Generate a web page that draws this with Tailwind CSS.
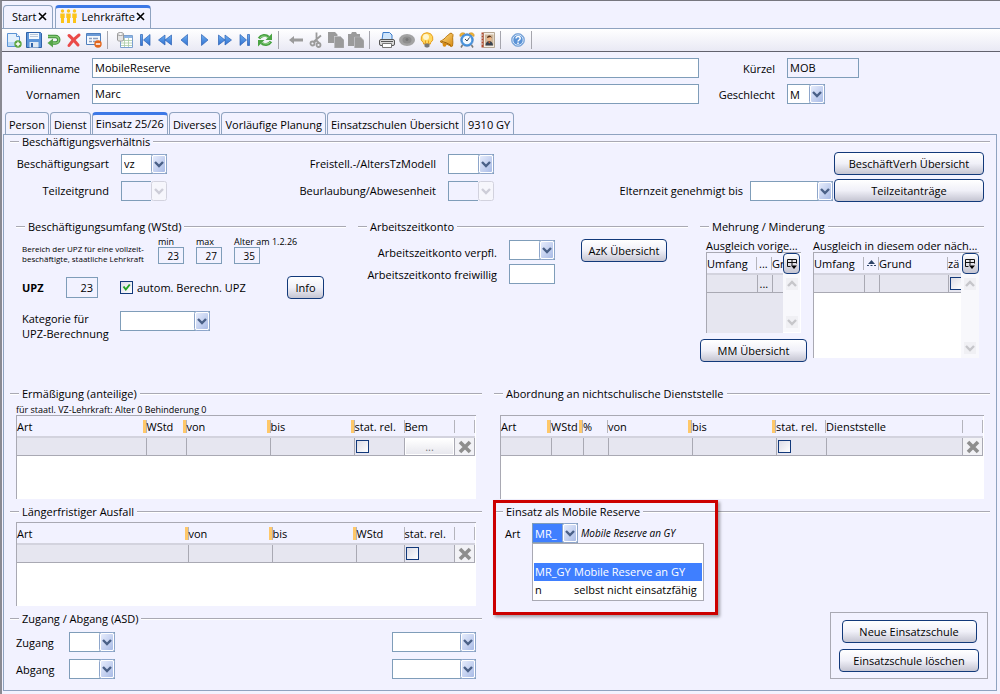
<!DOCTYPE html>
<html lang="de">
<head>
    <meta charset="UTF-8">
    <meta name="viewport" content="width=device-width, initial-scale=1.0">
    <title>Lehrkräfte - Einsatz 25/26</title>
    <script src="https://cdn.jsdelivr.net/npm/@tailwindcss/browser@4"></script>
</head>
<body class="flex min-h-screen flex-col border-t border-l-2 border-t-[#77777f] border-l-[#8a8a92] bg-[#f2f2ff] font-['Open_Sans','Noto_Sans',sans-serif] text-[11px] leading-[13px] text-black">

    <!-- Symbole -->
    <svg class="absolute size-0" aria-hidden="true">
        <defs>
            <linearGradient id="gArrow" x1="0" y1="0" x2="1" y2="1"><stop offset="0" stop-color="#e6ecfc"/><stop offset="1" stop-color="#a9bbe6"/></linearGradient>
            <linearGradient id="gBlue" x1="0" y1="0" x2="0" y2="1"><stop offset="0" stop-color="#6fb0f2"/><stop offset="1" stop-color="#2f6fd0"/></linearGradient>
            <linearGradient id="gGold" x1="0" y1="0" x2="1" y2="1"><stop offset="0" stop-color="#ffe08a"/><stop offset="1" stop-color="#d98a10"/></linearGradient>
        </defs>
        <symbol id="arrow" viewBox="0 0 16 20">
            <rect x=".5" y=".5" width="15" height="19" rx="2" fill="#fff" stroke="#8ea6cb"/>
            <rect x="2" y="2" width="12" height="16" rx="1" fill="url(#gArrow)"/>
            <path d="M4 8l4 4 4-4" fill="none" stroke="#4a6087" stroke-width="2.4"/>
        </symbol>
        <symbol id="arrowOff" viewBox="0 0 16 20">
            <rect x=".5" y=".5" width="15" height="19" rx="2" fill="#f6f6fc" stroke="#d2d2de"/>
            <path d="M4 8l4 4 4-4" fill="none" stroke="#cdcdd8" stroke-width="2.4"/>
        </symbol>
        <symbol id="close" viewBox="0 0 9 9"><path d="M1 1l7 7M8 1L1 8" stroke="#000" stroke-width="1.6"/></symbol>
        <symbol id="del" viewBox="0 0 14 14"><path d="M2 2l10 10M12 2L2 12" stroke="#8e8e8e" stroke-width="3.6"/></symbol>
        <symbol id="cols" viewBox="0 0 12 12">
            <path d="M1.5 8.500v-7h9v4M1.500 4.500h9M6 1.500v6M1.500 8.500h3" fill="none" stroke="#111"/>
            <path d="M5 7.500h6L8 11z"/>
        </symbol>
        <symbol id="up" viewBox="0 0 12 12"><path d="M2 8l4-4 4 4" fill="none" stroke="#c6c6ca" stroke-width="2.400"/></symbol>
        <symbol id="down" viewBox="0 0 12 12"><path d="M2 4l4 4 4-4" fill="none" stroke="#c6c6ca" stroke-width="2.400"/></symbol>
    </svg>

    <!-- Fensterreiter -->
    <nav class="flex h-[27px] items-end gap-[2px] pl-px">
        <div class="flex h-[23px] items-center gap-[2px] rounded-t-sm border border-b-0 border-[#8fa3c0] pr-[5px] pb-px pl-2">
            <span>Start</span>
            <button aria-label="Start schließen"><svg class="size-[9px]"><use href="#close"/></svg></button>
        </div>
        <div class="flex h-[23px] items-center gap-px rounded-t-sm border border-t-[3px] border-b-0 border-[#8fa3c0] border-t-[#3c78e6] pr-[5px] pb-1 pl-1">
            <svg class="mr-[3px] h-[14px] w-[17px]" viewBox="0 0 17 14" fill="#fcc419">
                <circle cx="2.500" cy="2" r="1.700"/><path d="M.3 4.500h4.400V9H4v5H1V9H.3z"/>
                <circle cx="8.500" cy="2" r="1.700"/><path d="M6.300 4.500h4.400V9H10v5H7V9h-.7z"/>
                <circle cx="14.500" cy="2" r="1.700"/><path d="M12.300 4.500h4.400V9H16v5h-3V9h-.7z"/>
            </svg>
            <span>Lehrkräfte</span>
            <button aria-label="Lehrkräfte schließen"><svg class="size-[9px]"><use href="#close"/></svg></button>
        </div>
    </nav>

    <!-- Werkzeugleiste -->
    <div role="toolbar" class="flex h-6 items-center gap-1 border-t border-b border-t-[#8fa3c0] border-b-[#62626e] bg-linear-to-b from-white to-[#e9e9f4] pl-1">
        <button aria-label="Neu"><svg class="size-4" viewBox="0 0 16 16"><path d="M1.500 1.500h9l3 3v10h-12z" fill="#e3f0fd" stroke="#5b93d4"/><path d="M2 10h11v4H2z" fill="#b9d8f6"/><path d="M10.500 1.500v3h3" fill="#fff" stroke="#5b93d4"/><circle cx="12" cy="12" r="3.700" fill="#5aa53c"/><path d="M12 9.800v4.400M9.800 12h4.400" stroke="#fff" stroke-width="1.400"/></svg></button>
        <button aria-label="Speichern"><svg class="size-4" viewBox="0 0 16 16"><path d="M.5.5h14l1 1v14H.5z" fill="#5d95d9" stroke="#2f62a8"/><path d="M3 1h10v6H3z" fill="#f4f8fd"/><path d="M4 2.500h8M4 4.500h8" stroke="#b7c6da"/><path d="M3.500 10h9v5.500h-9z" fill="#dfe8f3"/><path d="M5 11h2v4H5z" fill="#2f62a8"/></svg></button>
        <button aria-label="Rückgängig"><svg class="size-4" viewBox="0 0 16 16"><path d="M2 4.500h7.500a3.200 3.200 0 010 6.500H6" fill="none" stroke="#3f8f3a" stroke-width="3.400"/><path d="M2 4.500h7.500a3.200 3.200 0 010 6.500H6" fill="none" stroke="#86cb74" stroke-width="1.400"/><path d="M7 6.500v9L1.500 11z" fill="#55a548"/></svg></button>
        <button aria-label="Löschen"><svg class="size-4" viewBox="0 0 16 16"><path d="M3 3.500c3 2.500 6 6 9 9.500M13 3C9 6 6 9 3 13.500" fill="none" stroke="#ea4a48" stroke-width="3" stroke-linecap="round"/></svg></button>
        <button aria-label="Filter entfernen"><svg class="size-4" viewBox="0 0 16 16"><path d="M.5 1.500h14v11H.5z" fill="#f4f8fd" stroke="#4f7fbd"/><path d="M1 2h13v2H1z" fill="#6b9ad6"/><path d="M3 6.500h3M7 6.500h5M3 9.500h3M7 9.500h4" stroke="#8b9fc0" stroke-width="1.500"/><circle cx="12" cy="12" r="3.700" fill="#e2661c"/><path d="M9.800 12h4.400" stroke="#fff" stroke-width="1.500"/></svg></button>
        <span class="mr-[5px] ml-px h-[18px] w-px bg-[#a5a5ad]"></span>
        <button aria-label="Tabelle"><svg class="size-4" viewBox="0 0 16 16"><path d="M3.500 3.500h12v12h-12z" fill="#fff" stroke="#7ba0cf"/><path d="M4 4h11v2H4z" fill="#8cb4e4"/><path d="M4 8.500h11M4 11h11M4 13.500h11M7.500 6v9M11.500 6v9" stroke="#a9cba4" stroke-width=".8"/><path d="M.5 2v6c0 1.500 6 1.500 6 0V2z" fill="#e4e4e4" stroke="#999"/><ellipse cx="3.500" cy="2" rx="3" ry="1.500" fill="#f8f8f8" stroke="#999"/></svg></button>
        <button aria-label="Erster"><svg class="size-4" viewBox="0 0 16 16" fill="url(#gBlue)" stroke="#2c62b5" stroke-width=".7"><path d="M3.500 2.500h2v11h-2zM13 2.500v11L6.500 8z"/></svg></button>
        <button aria-label="Schnell zurück"><svg class="size-4" viewBox="0 0 16 16" fill="url(#gBlue)" stroke="#2c62b5" stroke-width=".7"><path d="M8 3v10L1.500 8zM14.500 3v10L8 8z"/></svg></button>
        <button aria-label="Zurück"><svg class="size-4" viewBox="0 0 16 16" fill="url(#gBlue)" stroke="#2c62b5" stroke-width=".7"><path d="M10.500 2.500v11L4 8z"/></svg></button>
        <button aria-label="Vor"><svg class="size-4" viewBox="0 0 16 16" fill="url(#gBlue)" stroke="#2c62b5" stroke-width=".7"><path d="M4.500 2.500v11L11 8z"/></svg></button>
        <button aria-label="Schnell vor"><svg class="size-4" viewBox="0 0 16 16" fill="url(#gBlue)" stroke="#2c62b5" stroke-width=".7"><path d="M1.500 3v10L8 8zM8 3v10l6.500-5z"/></svg></button>
        <button aria-label="Letzter"><svg class="size-4" viewBox="0 0 16 16" fill="url(#gBlue)" stroke="#2c62b5" stroke-width=".7"><path d="M3 2.500v11L9.500 8zM10.500 2.500h2v11h-2z"/></svg></button>
        <button aria-label="Aktualisieren"><svg class="size-4" viewBox="0 0 16 16"><path d="M2 6.500C4 3 9 2.500 11.500 5M14 9.500C12 13 7 13.500 4.500 11" fill="none" stroke="#4aa344" stroke-width="2.800"/><path d="M15 1.500V8H8.500zM1 14.500V8h6.500z" fill="#4aa344"/><path d="M3 6c2-2.500 6-2.500 8 0M13 10c-2 2.500-6 2.500-8 0" fill="none" stroke="#9ad78e"/></svg></button>
        <span class="mr-[5px] ml-px h-[18px] w-px bg-[#a5a5ad]"></span>
        <button aria-label="Navigieren"><svg class="size-4" viewBox="0 0 16 16" fill="#9b9b9b"><path d="M1 8l5-4v2.500h9v3H6V12z"/></svg></button>
        <button aria-label="Ausschneiden"><svg class="size-4" viewBox="0 0 16 16" fill="none" stroke="#9b9b9b" stroke-width="1.800"><path d="M8.500.5v7L6 11M13 3.500L6 9.500M8 8l3 3"/><circle cx="4.500" cy="11.500" r="2"/><circle cx="10.500" cy="13" r="2"/></svg></button>
        <button aria-label="Kopieren"><svg class="size-4" viewBox="0 0 16 16" fill="#9b9b9b"><path d="M0 0h7l2.500 2.500V4H6v7H0z"/><path d="M6.500 4.500h6L16 8v8H6.500z" stroke="#b8b8bc" stroke-width=".6"/></svg></button>
        <button aria-label="Einfügen"><svg class="size-4" viewBox="0 0 16 16" fill="#9b9b9b"><path d="M0 2h3l1-2h4l1 2h3v3H6v9H0z"/><path d="M6.500 5h6L16 8.500V16H6.500z" stroke="#b8b8bc" stroke-width=".6"/></svg></button>
        <span class="mr-[5px] ml-px h-[18px] w-px bg-[#a5a5ad]"></span>
        <button aria-label="Drucken"><svg class="size-4" viewBox="0 0 16 16"><path d="M4 .5h6.500L13 3v5H3z" fill="#cfe5fb" stroke="#3d7cc9"/><rect x=".5" y="7.500" width="15" height="6" rx="1.500" fill="#d9d9d9" stroke="#555"/><path d="M2 9.500h12" stroke="#555"/><path d="M3.500 11.500h9v4h-9z" fill="#fff" stroke="#777"/></svg></button>
        <button aria-label="Ansehen"><svg class="size-4" viewBox="0 0 16 16"><ellipse cx="8" cy="8" rx="8" ry="6" fill="#a3a3a3"/><ellipse cx="8" cy="8" rx="4.500" ry="3.500" fill="#8d8d8d"/><circle cx="8" cy="7.500" r="1.500" fill="#777"/></svg></button>
        <button aria-label="Tipp"><svg class="size-4" viewBox="0 0 16 16"><path d="M8 .7a6 5.600 0 00-3.500 10.100V12h7v-1.200A6 5.600 0 008 .7z" fill="#ffd75e" stroke="#e8a020"/><circle cx="7" cy="5" r="3" fill="#fff6cf"/><path d="M5.500 11.500h5v3l-1.500 1H7l-1.500-1z" fill="#777"/><path d="M6.500 8.500v3M9.500 8.500v3" stroke="#e8a020"/></svg></button>
        <button aria-label="Erinnerung"><svg class="size-4" viewBox="0 0 16 16"><path d="M11 1.500c1-1 3.500.5 3 2-1 3 .5 6-.5 10.500-1 1-2 .5-3-.5C7.500 11.500 3.500 12 1 9.500c2-1.500 3.500-1.500 5.500-4C8 3.500 9.500 3 11 1.500z" fill="url(#gGold)" stroke="#b9770e"/><circle cx="5.500" cy="12.800" r="1.900" fill="#d98a10"/><path d="M2.500 9.500c3 .5 6 1.500 9.500 4" fill="none" stroke="#9a5d08"/></svg></button>
        <button aria-label="Wecker"><svg class="size-4" viewBox="0 0 16 16"><path d="M1 4.500C0 1 4 0 6 1.500zM15 4.500C16 1 12 0 10 1.500z" fill="#f3b93b" stroke="#c98615" stroke-width=".6"/><path d="M3.500 13l-1.500 2.500M12.500 13l1.500 2.500" stroke="#777" stroke-width="1.500"/><circle cx="8" cy="8" r="6.300" fill="#4c97e0" stroke="#2f6fb5" stroke-width=".6"/><circle cx="8" cy="8" r="4.300" fill="#f5faff"/><path d="M6 7l2 2 2.500-3.500" fill="none" stroke="#345"/></svg></button>
        <button aria-label="Adressbuch"><svg class="ml-px size-4" viewBox="0 0 16 16"><path d="M3.500.5h11v15h-11z" fill="#f3eee6" stroke="#b5a692"/><path d="M1.500.500h2v15h-2z" fill="#b34a2c"/><path d="M0 3h3M0 6h3M0 9h3M0 12h3" stroke="#ddd"/><path d="M5 2.500h8.500v11H5z" fill="#cfb89c"/><circle cx="9.300" cy="6.500" r="2.200" fill="#f0b583"/><path d="M7 6c0-3.500 4.700-3.500 4.700 0L10.500 5z" fill="#5a3317"/><path d="M5.500 13.500c0-6 7.500-6 7.500 0z" fill="#38424f"/><path d="M8 9.500h2.500l-1.200 2z" fill="#de6b2c"/></svg></button>
        <span class="mr-[5px] h-[18px] w-px bg-[#a5a5ad]"></span>
        <button aria-label="Hilfe"><svg class="size-4" viewBox="0 0 16 16"><circle cx="8" cy="8" r="6.500" fill="#5b93d6" stroke="#8fb1dc"/><circle cx="8" cy="8" r="5.200" fill="none" stroke="#d6e6f8"/><path d="M6 6.500c0-2.700 4.200-2.500 4.200 0C10.200 8 8 8 8 9.600M8 10.600v1.500" fill="none" stroke="#fff" stroke-width="1.500"/></svg></button>
        <span class="ml-px h-[18px] w-px bg-[#a5a5ad]"></span>
    </div>

    <!-- Kopfdaten -->
    <form class="grid grid-cols-[78px_1fr_64px_72px] items-center gap-x-3 gap-y-[6px] pt-[6px] pr-[141px]">
        <label for="familienname" class="text-right">Familienname</label>
        <input id="familienname" value="MobileReserve" class="h-5 min-w-0 border border-[#7f9db9] bg-white px-[2px] pb-px">
        <label for="kuerzel" class="text-right">Kürzel</label>
        <input id="kuerzel" value="MOB" readonly class="h-5 min-w-0 border border-[#7f9db9] px-[2px] pb-px">
        <label for="vornamen" class="text-right">Vornamen</label>
        <input id="vornamen" value="Marc" class="h-5 min-w-0 border border-[#7f9db9] bg-white px-[2px] pb-px">
        <label for="geschlecht" class="text-right">Geschlecht</label>
        <div class="relative h-5 w-[38px]">
            <select id="geschlecht" class="h-5 w-full appearance-none border border-[#7f9db9] bg-white pl-[2px]"><option>M</option></select>
            <svg class="pointer-events-none absolute top-0 right-0 h-5 w-4"><use href="#arrow"/></svg>
        </div>
    </form>

    <!-- Karteireiter -->
    <nav class="mt-2 flex h-[22px] gap-px pl-[3px]">
        <button class="rounded-t-sm border border-b-0 border-[#8fa3c0] px-[3px] pt-[2px]">Person</button>
        <button class="rounded-t-sm border border-b-0 border-[#8fa3c0] px-[3px] pt-[2px]">Dienst</button>
        <button class="-mb-px rounded-t-sm border border-t-[3px] border-b-0 border-[#8fa3c0] border-t-[#3c78e6] bg-[#f2f2ff] px-[3px] pb-1">Einsatz 25/26</button>
        <button class="rounded-t-sm border border-b-0 border-[#8fa3c0] px-[3px] pt-[2px]">Diverses</button>
        <button class="rounded-t-sm border border-b-0 border-[#8fa3c0] px-[3px] pt-[2px]">Vorläufige Planung</button>
        <button class="rounded-t-sm border border-b-0 border-[#8fa3c0] px-[3px] pt-[2px]">Einsatzschulen Übersicht</button>
        <button class="rounded-t-sm border border-b-0 border-[#8fa3c0] px-[3px] pt-[2px]">9310 GY</button>
    </nav>

    <main class="mr-[3px] mb-[3px] ml-px flex-1 border border-[#8fa3c0] px-[6px] pb-[11px]">

        <!-- Beschäftigungsverhältnis -->
        <section>
            <h2 class="flex items-center gap-[3px] before:w-[9px] before:border-t before:border-b before:border-t-[#a9a9b3] before:border-b-white after:flex-1 after:border-t after:border-b after:border-t-[#a9a9b3] after:border-b-white">Beschäftigungsverhältnis</h2>
            <div class="mt-1 flex flex-col gap-1 pr-[6px]">
                <div class="flex h-[23px] items-center gap-3">
                    <label for="bart" class="w-[99px] text-right">Beschäftigungsart</label>
                    <div class="relative h-5 w-[46px]">
                        <select id="bart" class="h-5 w-full appearance-none border border-[#7f9db9] bg-white pl-[2px]"><option>vz</option></select>
                        <svg class="pointer-events-none absolute top-0 right-0 h-5 w-4"><use href="#arrow"/></svg>
                    </div>
                    <label for="freist" class="flex-[257] text-right">Freistell.-/AltersTzModell</label>
                    <div class="relative h-5 w-[46px]">
                        <select id="freist" class="h-5 w-full appearance-none border border-[#7f9db9] bg-white"></select>
                        <svg class="pointer-events-none absolute top-0 right-0 h-5 w-4"><use href="#arrow"/></svg>
                    </div>
                    <div class="flex flex-[478] justify-end">
                        <button class="h-[23px] w-[150px] rounded-sm border border-[#12397a] bg-linear-to-b from-white via-[#f0f0f8] to-[#c5c5d2]">BeschäftVerh Übersicht</button>
                    </div>
                </div>
                <div class="flex h-[23px] items-center gap-3">
                    <label for="tzgrund" class="w-[99px] text-right">Teilzeitgrund</label>
                    <div class="relative h-5 w-[46px]">
                        <select id="tzgrund" disabled class="h-5 w-full appearance-none border border-[#7f9db9]"></select>
                        <svg class="pointer-events-none absolute top-0 right-0 h-5 w-4 bg-[#f2f2ff]"><use href="#arrowOff"/></svg>
                    </div>
                    <label for="beurl" class="flex-[257] text-right">Beurlaubung/Abwesenheit</label>
                    <div class="relative h-5 w-[46px]">
                        <select id="beurl" disabled class="h-5 w-full appearance-none border border-[#7f9db9]"></select>
                        <svg class="pointer-events-none absolute top-0 right-0 h-5 w-4 bg-[#f2f2ff]"><use href="#arrowOff"/></svg>
                    </div>
                    <div class="flex flex-[478] items-center justify-end">
                        <label for="eltern" class="mr-[7px]">Elternzeit genehmigt bis</label>
                        <div class="relative mr-px h-5 w-[83px]">
                            <select id="eltern" class="h-5 w-full appearance-none border border-[#7f9db9] bg-white"></select>
                            <svg class="pointer-events-none absolute top-0 right-0 h-5 w-4"><use href="#arrow"/></svg>
                        </div>
                        <button class="h-[23px] w-[150px] rounded-sm border border-[#12397a] bg-linear-to-b from-white via-[#f0f0f8] to-[#c5c5d2]">Teilzeitanträge</button>
                    </div>
                </div>
            </div>
        </section>

        <div class="mt-[18px] grid grid-cols-[330fr_330fr_284fr] gap-3 px-[6px]">
            <!-- Beschäftigungsumfang -->
            <section class="min-w-0">
                <h2 class="flex items-center gap-[3px] before:w-[9px] before:border-t before:border-b before:border-t-[#a9a9b3] before:border-b-white after:flex-1 after:border-t after:border-b after:border-t-[#a9a9b3] after:border-b-white">Beschäftigungsumfang (WStd)</h2>
                <div class="mt-1 flex items-end gap-3 pl-[6px] text-[9px] leading-[10px]">
                    <p class="w-[124px] text-[8px] whitespace-nowrap">Bereich der UPZ für eine vollzeit-<br>beschäftigte, staatliche Lehrkraft</p>
                    <div class="flex w-[26px] flex-col whitespace-nowrap">
                        <label for="umin">min</label>
                        <input id="umin" value="23" class="h-[17px] w-[26px] border border-[#7f9db9] pr-1 text-right text-[10px]">
                    </div>
                    <div class="flex w-[26px] flex-col whitespace-nowrap">
                        <label for="umax">max</label>
                        <input id="umax" value="27" class="h-[17px] w-[26px] border border-[#7f9db9] pr-1 text-right text-[10px]">
                    </div>
                    <div class="flex w-[26px] flex-col whitespace-nowrap">
                        <label for="alter">Alter am 1.2.26</label>
                        <input id="alter" value="35" class="h-[17px] w-[26px] border border-[#7f9db9] pr-1 text-right text-[10px]">
                    </div>
                </div>
                <div class="mt-3 flex h-[23px] items-center pr-[22px] pl-[6px]">
                    <label for="upz" class="w-11 font-bold">UPZ</label>
                    <input id="upz" value="23" class="h-[21px] w-8 border border-[#7f9db9] pr-1 text-right">
                    <span class="relative ml-[22px] flex">
                        <input id="auto" type="checkbox" checked class="peer size-[13px] appearance-none border border-[#12397a] bg-linear-to-br from-[#dcdce6] to-white">
                        <svg class="pointer-events-none absolute inset-0 hidden size-[13px] peer-checked:block" viewBox="0 0 13 13"><path d="M3.500 5.500l2.300 3 4-5" fill="none" stroke="#21a121" stroke-width="2"/></svg>
                    </span>
                    <label for="auto" class="ml-1">autom. Berechn. UPZ</label>
                    <button class="ml-auto h-[23px] w-[37px] rounded-sm border border-[#12397a] bg-linear-to-b from-white via-[#f0f0f8] to-[#c5c5d2]">Info</button>
                </div>
                <div class="mt-3 flex pl-[6px]">
                    <label for="kat" class="w-[98px] leading-[15px] whitespace-nowrap">Kategorie für<br>UPZ-Berechnung</label>
                    <div class="relative h-5 w-[90px]">
                        <select id="kat" class="h-5 w-full appearance-none border border-[#7f9db9] bg-white"></select>
                        <svg class="pointer-events-none absolute top-0 right-0 h-5 w-4"><use href="#arrow"/></svg>
                    </div>
                </div>
            </section>

            <!-- Arbeitszeitkonto -->
            <section class="min-w-0">
                <h2 class="flex items-center gap-[3px] before:w-[9px] before:border-t before:border-b before:border-t-[#a9a9b3] before:border-b-white after:flex-1 after:border-t after:border-b after:border-t-[#a9a9b3] after:border-b-white">Arbeitszeitkonto</h2>
                <div class="mt-[6px] flex gap-[26px]">
                    <div class="grid grid-cols-[139px_46px] items-center gap-x-3 gap-y-1 pt-px whitespace-nowrap">
                        <label for="azkv" class="pt-1 text-right">Arbeitszeitkonto verpfl.</label>
                        <div class="relative h-5">
                            <select id="azkv" class="h-5 w-full appearance-none border border-[#7f9db9] bg-white"></select>
                            <svg class="pointer-events-none absolute top-0 right-0 h-5 w-4"><use href="#arrow"/></svg>
                        </div>
                        <label for="azkf" class="text-right">Arbeitszeitkonto freiwillig</label>
                        <input id="azkf" class="h-5 min-w-0 border border-[#7f9db9] bg-white px-1">
                    </div>
                    <button class="h-[23px] w-[86px] rounded-sm border border-[#12397a] bg-linear-to-b from-white via-[#f0f0f8] to-[#c5c5d2] whitespace-nowrap">AzK Übersicht</button>
                </div>
            </section>

            <!-- Mehrung / Minderung -->
            <section class="min-w-0">
                <h2 class="flex items-center gap-[3px] before:w-[9px] before:border-t before:border-b before:border-t-[#a9a9b3] before:border-b-white after:flex-1 after:border-t after:border-b after:border-t-[#a9a9b3] after:border-b-white">Mehrung / Minderung</h2>
                <div class="mt-[6px] flex gap-[6px] pr-[5px]">
                    <div class="w-[107px]">
                        <div class="pr-[6px] pl-[6px]">
                            <h3 class="whitespace-nowrap">Ausgleich vorige...</h3>
                            <div class="flex h-[81px] border-t border-l border-[#a9a9b3] bg-[#e6e6f0]">
                                <div class="min-w-0 flex-1">
                                    <table class="w-full table-fixed border-collapse text-left">
                                        <colgroup><col class="w-[50px]"><col class="w-[15px]"><col></colgroup>
                                        <thead class="bg-[#f2f2ff]">
                                            <tr class="h-[21px] border-b-2 border-[#d3d3de]">
                                                <th class="p-0 font-normal"><div class="border-r border-[#b4b4bc]">Umfang</div></th>
                                                <th class="p-0 font-normal"><div class="border-r border-[#b4b4bc] pl-[2px]">...</div></th>
                                                <th class="p-0 font-normal">Gr</th>
                                            </tr>
                                        </thead>
                                        <tbody>
                                            <tr class="h-[18px] border-b border-[#a9a9b3]">
                                                <td class="border-r border-[#a9a9b3] p-0"></td>
                                                <td class="border-r border-[#a9a9b3] p-0 pl-[2px]">...</td>
                                                <td class="p-0"></td>
                                            </tr>
                                        </tbody>
                                    </table>
                                </div>
                                <div class="flex w-[18px] flex-col items-center border-r border-b border-white bg-[#f8f8fc]">
                                    <button aria-label="Spalten" class="flex h-[21px] w-[17px] items-center justify-center rounded-sm border border-[#12397a] bg-linear-to-b from-white to-[#c5c5d2]"><svg class="size-3"><use href="#cols"/></svg></button>
                                    <button aria-label="Nach oben" class="mt-1 bg-[#f0f0f4]"><svg class="size-3"><use href="#up"/></svg></button>
                                    <button aria-label="Nach unten" class="mt-auto mb-1 bg-[#f0f0f4]"><svg class="size-3"><use href="#down"/></svg></button>
                                </div>
                            </div>
                        </div>
                        <button class="mt-[6px] h-[23px] w-full rounded-sm border border-[#12397a] bg-linear-to-b from-white via-[#f0f0f8] to-[#c5c5d2]">MM Übersicht</button>
                    </div>
                    <div class="min-w-0 flex-1">
                        <h3 class="whitespace-nowrap">Ausgleich in diesem oder näch...</h3>
                        <div class="flex h-[106px] border-t border-l border-[#a9a9b3] bg-white">
                            <div class="min-w-0 flex-1">
                                <table class="w-full table-fixed border-collapse text-left">
                                    <colgroup><col class="w-[50px]"><col class="w-[15px]"><col><col class="w-[13px]"></colgroup>
                                    <thead class="bg-[#f2f2ff]">
                                        <tr class="h-[21px] border-b-2 border-[#d3d3de]">
                                            <th class="p-0 font-normal"><div class="border-r border-[#b4b4bc]">Umfang</div></th>
                                            <th class="p-0 font-normal"><div class="flex h-[13px] items-center justify-center border-r border-[#b4b4bc]"><svg class="h-2 w-[9px]" viewBox="0 0 9 8" fill="#2d4467"><path d="M4.500 1L8 5H1z"/><path d="M0 6h2v1H0zM3.500 6h2v1h-2zM7 6h2v1H7z"/></svg></div></th>
                                            <th class="p-0 font-normal"><div class="border-r border-[#b4b4bc]">Grund</div></th>
                                            <th class="p-0 font-normal">zä</th>
                                        </tr>
                                    </thead>
                                    <tbody class="bg-[#e6e6f0]">
                                        <tr class="h-[18px] border-b border-[#a9a9b3]">
                                            <td class="border-r border-[#a9a9b3] p-0"></td>
                                            <td class="border-r border-[#a9a9b3] p-0"></td>
                                            <td class="border-r border-[#a9a9b3] p-0"></td>
                                            <td class="overflow-hidden p-0 pl-px"><input type="checkbox" aria-label="zählt" class="block size-[13px] appearance-none border border-[#12397a] bg-linear-to-br from-[#dcdce6] to-white"></td>
                                        </tr>
                                    </tbody>
                                </table>
                            </div>
                            <div class="flex w-[18px] flex-col items-center bg-[#f8f8fc]">
                                <button aria-label="Spalten" class="flex h-[21px] w-[17px] items-center justify-center rounded-sm border border-[#12397a] bg-linear-to-b from-white to-[#c5c5d2]"><svg class="size-3"><use href="#cols"/></svg></button>
                                <button aria-label="Nach oben" class="mt-1 bg-[#f0f0f4]"><svg class="size-3"><use href="#up"/></svg></button>
                                <button aria-label="Nach unten" class="mt-auto mb-1 bg-[#f0f0f4]"><svg class="size-3"><use href="#down"/></svg></button>
                            </div>
                        </div>
                    </div>
                </div>
            </section>
        </div>

        <div class="mt-[25px] grid grid-cols-[472fr_496fr] gap-3">
            <div class="min-w-0">
                <!-- Ermäßigung -->
                <section>
                    <h2 class="flex items-center gap-[3px] before:w-[9px] before:border-t before:border-b before:border-t-[#a9a9b3] before:border-b-white after:flex-1 after:border-t after:border-b after:border-t-[#a9a9b3] after:border-b-white">Ermäßigung (anteilige)</h2>
                    <p class="mt-1 pl-[6px] text-[9px] leading-[11px]">für staatl. VZ-Lehrkraft: Alter 0 Behinderung 0</p>
                    <div class="mx-[6px] h-[84px] border-t border-l border-[#a9a9b3] bg-white pr-px">
                        <table class="w-full table-fixed border-collapse text-left">
                            <colgroup><col><col class="w-10"><col class="w-[84px]"><col class="w-[84px]"><col class="w-[50px]"><col class="w-[50px]"><col class="w-5"></colgroup>
                            <thead class="bg-[#f2f2ff]">
                                <tr class="h-[21px] border-b-2 border-[#d3d3de]">
                                    <th class="p-0 font-normal"><div class="border-r border-[#b4b4bc] shadow-[inset_-3px_0_#ffc869]">Art</div></th>
                                    <th class="p-0 font-normal"><div class="border-r border-[#b4b4bc] shadow-[inset_-3px_0_#ffc869]">WStd</div></th>
                                    <th class="p-0 font-normal"><div class="border-r border-[#b4b4bc] shadow-[inset_-3px_0_#ffc869]">von</div></th>
                                    <th class="p-0 font-normal"><div class="border-r border-[#b4b4bc] shadow-[inset_-3px_0_#ffc869]">bis</div></th>
                                    <th class="p-0 font-normal whitespace-nowrap"><div class="border-r border-[#b4b4bc]">stat. rel.</div></th>
                                    <th class="p-0 font-normal"><div class="border-r border-[#b4b4bc]">Bem</div></th>
                                    <th class="p-0 font-normal"><div class="h-[13px] border-r border-[#b4b4bc]"></div></th>
                                </tr>
                            </thead>
                            <tbody class="bg-[#e6e6f0]">
                                <tr class="h-[18px] border-b border-[#a9a9b3]">
                                    <td class="border-r border-[#a9a9b3] p-0"></td>
                                    <td class="border-r border-[#a9a9b3] p-0"></td>
                                    <td class="border-r border-[#a9a9b3] p-0"></td>
                                    <td class="border-r border-[#a9a9b3] p-0"></td>
                                    <td class="border-r border-[#a9a9b3] p-0 pl-px"><input type="checkbox" aria-label="stat. rel." class="block size-[13px] appearance-none border border-[#12397a] bg-linear-to-br from-[#dcdce6] to-white"></td>
                                    <td class="border-r border-[#a9a9b3] p-0"><button class="block h-[17px] w-full border border-white bg-linear-to-b from-white to-[#e8e8ee] text-[#777]">...</button></td>
                                    <td class="border-r border-[#a9a9b3] p-0"><button aria-label="Zeile löschen" class="flex h-[17px] w-full items-center justify-center bg-[#f2f2f6]"><svg class="size-[14px]"><use href="#del"/></svg></button></td>
                                </tr>
                            </tbody>
                        </table>
                    </div>
                </section>

                <!-- Längerfristiger Ausfall -->
                <section class="mt-[6px]">
                    <h2 class="flex items-center gap-[3px] before:w-[9px] before:border-t before:border-b before:border-t-[#a9a9b3] before:border-b-white after:flex-1 after:border-t after:border-b after:border-t-[#a9a9b3] after:border-b-white">Längerfristiger Ausfall</h2>
                    <div class="mx-[6px] mt-1 h-[84px] border-t border-l border-[#a9a9b3] bg-white pr-px">
                        <table class="w-full table-fixed border-collapse text-left">
                            <colgroup><col><col class="w-[84px]"><col class="w-[84px]"><col class="w-12"><col class="w-[50px]"><col class="w-5"></colgroup>
                            <thead class="bg-[#f2f2ff]">
                                <tr class="h-[21px] border-b-2 border-[#d3d3de]">
                                    <th class="p-0 font-normal"><div class="border-r border-[#b4b4bc] shadow-[inset_-3px_0_#ffc869]">Art</div></th>
                                    <th class="p-0 font-normal"><div class="border-r border-[#b4b4bc] shadow-[inset_-3px_0_#ffc869]">von</div></th>
                                    <th class="p-0 font-normal"><div class="border-r border-[#b4b4bc] shadow-[inset_-3px_0_#ffc869]">bis</div></th>
                                    <th class="p-0 font-normal"><div class="border-r border-[#b4b4bc]">WStd</div></th>
                                    <th class="p-0 font-normal whitespace-nowrap"><div class="border-r border-[#b4b4bc]">stat. rel.</div></th>
                                    <th class="p-0 font-normal"><div class="h-[13px] border-r border-[#b4b4bc]"></div></th>
                                </tr>
                            </thead>
                            <tbody class="bg-[#e6e6f0]">
                                <tr class="h-[18px] border-b border-[#a9a9b3]">
                                    <td class="border-r border-[#a9a9b3] p-0"></td>
                                    <td class="border-r border-[#a9a9b3] p-0"></td>
                                    <td class="border-r border-[#a9a9b3] p-0"></td>
                                    <td class="border-r border-[#a9a9b3] p-0"></td>
                                    <td class="border-r border-[#a9a9b3] p-0 pl-px"><input type="checkbox" aria-label="stat. rel." class="block size-[13px] appearance-none border border-[#12397a] bg-linear-to-br from-[#dcdce6] to-white"></td>
                                    <td class="border-r border-[#a9a9b3] p-0"><button aria-label="Zeile löschen" class="flex h-[17px] w-full items-center justify-center bg-[#f2f2f6]"><svg class="size-[14px]"><use href="#del"/></svg></button></td>
                                </tr>
                            </tbody>
                        </table>
                    </div>
                </section>

                <!-- Zugang / Abgang -->
                <section class="mt-[6px]">
                    <h2 class="flex items-center gap-[3px] before:w-[9px] before:border-t before:border-b before:border-t-[#a9a9b3] before:border-b-white after:flex-1 after:border-t after:border-b after:border-t-[#a9a9b3] after:border-b-white">Zugang / Abgang (ASD)</h2>
                    <div class="mt-[7px] flex flex-col gap-[7px] px-[6px]">
                        <div class="flex items-center">
                            <label for="zugang" class="w-[53px]">Zugang</label>
                            <div class="relative h-5 w-[46px]">
                                <select id="zugang" class="h-5 w-full appearance-none border border-[#7f9db9] bg-white"></select>
                                <svg class="pointer-events-none absolute top-0 right-0 h-5 w-4"><use href="#arrow"/></svg>
                            </div>
                            <div class="relative ml-auto h-5 w-[84px]">
                                <select aria-label="Zugang Datum" class="h-5 w-full appearance-none border border-[#7f9db9] bg-white"></select>
                                <svg class="pointer-events-none absolute top-0 right-0 h-5 w-4"><use href="#arrow"/></svg>
                            </div>
                        </div>
                        <div class="flex items-center">
                            <label for="abgang" class="w-[53px]">Abgang</label>
                            <div class="relative h-5 w-[46px]">
                                <select id="abgang" class="h-5 w-full appearance-none border border-[#7f9db9] bg-white"></select>
                                <svg class="pointer-events-none absolute top-0 right-0 h-5 w-4"><use href="#arrow"/></svg>
                            </div>
                            <div class="relative ml-auto h-5 w-[84px]">
                                <select aria-label="Abgang Datum" class="h-5 w-full appearance-none border border-[#7f9db9] bg-white"></select>
                                <svg class="pointer-events-none absolute top-0 right-0 h-5 w-4"><use href="#arrow"/></svg>
                            </div>
                        </div>
                    </div>
                </section>
            </div>

            <div class="flex min-w-0 flex-col">
                <!-- Abordnung -->
                <section>
                    <h2 class="flex items-center gap-[3px] before:w-[9px] before:border-t before:border-b before:border-t-[#a9a9b3] before:border-b-white after:flex-1 after:border-t after:border-b after:border-t-[#a9a9b3] after:border-b-white">Abordnung an nichtschulische Dienststelle</h2>
                    <div class="mx-[6px] mt-[15px] h-[84px] border-t border-l border-[#a9a9b3] bg-white pr-px">
                        <table class="w-full table-fixed border-collapse text-left">
                            <colgroup><col class="w-[50px]"><col class="w-8"><col class="w-[25px]"><col class="w-[84px]"><col class="w-[84px]"><col class="w-[50px]"><col><col class="w-5"></colgroup>
                            <thead class="bg-[#f2f2ff]">
                                <tr class="h-[21px] border-b-2 border-[#d3d3de]">
                                    <th class="p-0 font-normal"><div class="border-r border-[#b4b4bc] shadow-[inset_-3px_0_#ffc869]">Art</div></th>
                                    <th class="p-0 font-normal"><div class="border-r border-[#b4b4bc] shadow-[inset_-3px_0_#ffc869]">WStd</div></th>
                                    <th class="p-0 font-normal"><div class="border-r border-[#b4b4bc]">%</div></th>
                                    <th class="p-0 font-normal"><div class="border-r border-[#b4b4bc] shadow-[inset_-3px_0_#ffc869]">von</div></th>
                                    <th class="p-0 font-normal"><div class="border-r border-[#b4b4bc] shadow-[inset_-3px_0_#ffc869]">bis</div></th>
                                    <th class="p-0 font-normal whitespace-nowrap"><div class="border-r border-[#b4b4bc]">stat. rel.</div></th>
                                    <th class="p-0 font-normal"><div class="border-r border-[#b4b4bc]">Dienststelle</div></th>
                                    <th class="p-0 font-normal"><div class="h-[13px] border-r border-[#b4b4bc]"></div></th>
                                </tr>
                            </thead>
                            <tbody class="bg-[#e6e6f0]">
                                <tr class="h-[18px] border-b border-[#a9a9b3]">
                                    <td class="border-r border-[#a9a9b3] p-0"></td>
                                    <td class="border-r border-[#a9a9b3] p-0"></td>
                                    <td class="border-r border-[#a9a9b3] p-0"></td>
                                    <td class="border-r border-[#a9a9b3] p-0"></td>
                                    <td class="border-r border-[#a9a9b3] p-0"></td>
                                    <td class="border-r border-[#a9a9b3] p-0 pl-px"><input type="checkbox" aria-label="stat. rel." class="block size-[13px] appearance-none border border-[#12397a] bg-linear-to-br from-[#dcdce6] to-white"></td>
                                    <td class="border-r border-[#a9a9b3] p-0"></td>
                                    <td class="border-r border-[#a9a9b3] p-0"><button aria-label="Zeile löschen" class="flex h-[17px] w-full items-center justify-center bg-[#f2f2f6]"><svg class="size-[14px]"><use href="#del"/></svg></button></td>
                                </tr>
                            </tbody>
                        </table>
                    </div>
                </section>

                <!-- Einsatz als Mobile Reserve -->
                <section class="relative mt-[6px]">
                    <h2 class="flex items-center gap-[3px] before:w-[9px] before:border-t before:border-b before:border-t-[#a9a9b3] before:border-b-white after:flex-1 after:border-t after:border-b after:border-t-[#a9a9b3] after:border-b-white">Einsatz als Mobile Reserve</h2>
                    <div class="mt-[5px] flex items-center pl-[11px]">
                        <label for="mrart" class="w-[27px]">Art</label>
                        <div class="relative h-5 w-[46px]">
                            <select id="mrart" class="h-5 w-full appearance-none border border-[#7f9db9] bg-[#3f7fff] pl-[2px] text-white"><option>MR_</option></select>
                            <svg class="pointer-events-none absolute top-0 right-0 h-5 w-4"><use href="#arrow"/></svg>
                            <!-- Aufgeklappte Liste -->
                            <ul role="listbox" aria-label="Art" class="absolute top-5 left-0 z-10 w-[172px] border border-[#a9a9b3] bg-white p-px leading-[18px] whitespace-nowrap">
                                <li role="option" class="h-[18px]"></li>
                                <li role="option" aria-selected="true" class="flex h-[18px] bg-[#3f7fff] pl-px text-white"><span class="w-[39px]">MR_GY</span><span>Mobile Reserve an GY</span></li>
                                <li role="option" class="flex h-[18px] pl-px"><span class="w-[39px]">n</span><span>selbst nicht einsatzfähig</span></li>
                            </ul>
                        </div>
                        <span class="ml-[3px] text-[10px] italic">Mobile Reserve an GY</span>
                    </div>
                    <div class="pointer-events-none absolute -top-[5px] -left-px h-[115px] w-[225px] border-[3px] border-[#cc0000] shadow-[2px_2px_3px_rgba(0,0,0,0.35)]"></div>
                </section>

                <div class="mt-auto mr-[2px] flex w-[158px] flex-col items-center gap-[6px] self-end border border-[#a9a9b3] pt-[7px] pb-[6px]">
                    <button class="h-[23px] w-[135px] rounded-sm border border-[#12397a] bg-linear-to-b from-white via-[#f0f0f8] to-[#c5c5d2]">Neue Einsatzschule</button>
                    <button class="h-[23px] w-[140px] rounded-sm border border-[#12397a] bg-linear-to-b from-white via-[#f0f0f8] to-[#c5c5d2]">Einsatzschule löschen</button>
                </div>
            </div>
        </div>
    </main>

</body>
</html>
